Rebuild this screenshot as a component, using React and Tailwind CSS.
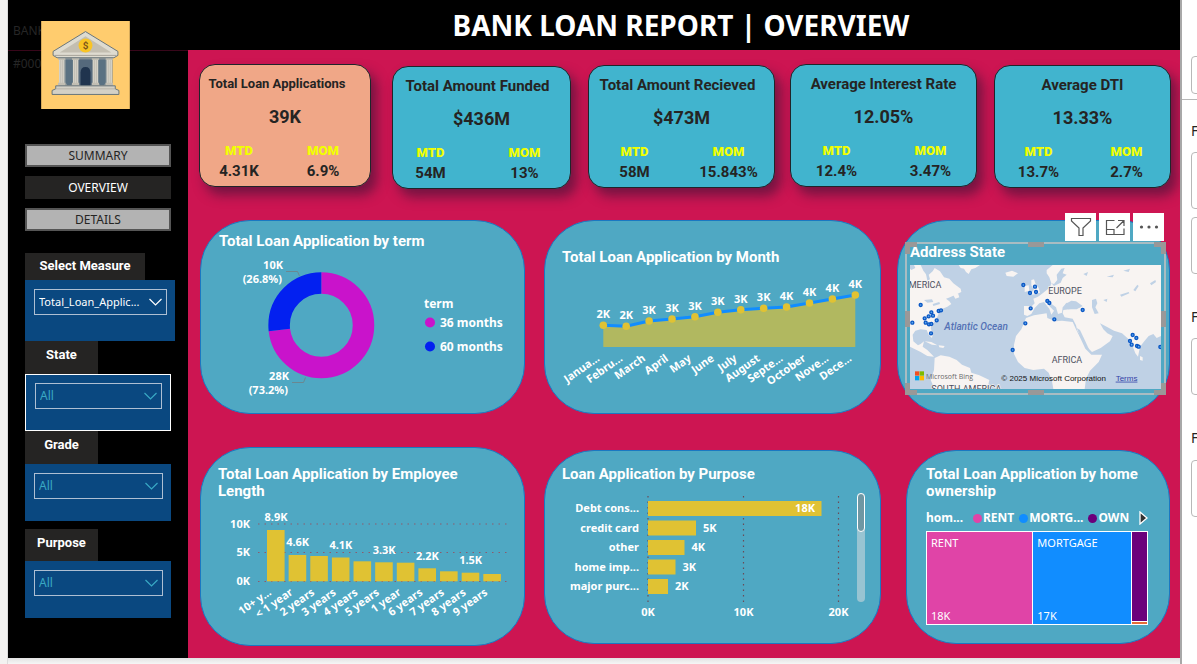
import React from "react";

const SEGOE = "font-['Noto_Sans','Open_Sans',sans-serif]";
const DIN = "font-['Roboto','Liberation_Sans',sans-serif]";

const kpis = [
  { title: "Total Loan Applications", value: "39K", mtd: "4.31K", mom: "6.9%", box: "bg-[#f0a787]", titleSize: "text-[13px] pr-4", cols: "grid-cols-[84px_84px] pr-2" },
  { title: "Total Amount Funded", value: "$436M", mtd: "54M", mom: "13%", box: "ml-[21px] mt-[2px] bg-[#41b4ce]", titleSize: "text-[15px] pr-2", cols: "grid-cols-[94px_94px] pr-2" },
  { title: "Total Amount Recieved", value: "$473M", mtd: "58M", mom: "15.843%", box: "ml-[17px] mt-[1px] bg-[#41b4ce]", titleSize: "text-[15px] pr-2", cols: "grid-cols-[94px_94px]" },
  { title: "Average Interest Rate", value: "12.05%", mtd: "12.4%", mom: "3.47%", box: "ml-[15px] bg-[#41b4ce]", titleSize: "text-[15px]", cols: "grid-cols-[94px_94px]" },
  { title: "Average DTI", value: "13.33%", mtd: "13.7%", mom: "2.7%", box: "ml-[17px] mt-[1px] bg-[#41b4ce]", titleSize: "text-[15px]", cols: "grid-cols-[88px_88px]" },
];

function Kpi({ k }) {
  return (
    <article className={`${DIN} h-[123px] min-w-0 rounded-2xl border border-[#20242a] pt-[9px] text-center font-bold text-[#252423] shadow-[6px_8px_12px_rgba(30,20,50,0.5)] ${k.box}`}>
      <h2 className={`leading-5 whitespace-nowrap ${k.titleSize}`}>{k.title}</h2>
      <p className="mt-[13px] text-lg leading-5">{k.value}</p>
      <dl className={`mt-[14px] grid justify-center ${k.cols}`}>
        <div>
          <dt className="text-[13px] leading-5 font-black text-[#f2ff00]">MTD</dt>
          <dd className="text-[15px] leading-5">{k.mtd}</dd>
        </div>
        <div>
          <dt className="text-[13px] leading-5 font-black text-[#f2ff00]">MOM</dt>
          <dd className="text-[15px] leading-5">{k.mom}</dd>
        </div>
      </dl>
    </article>
  );
}

function Panel({ className, children }) {
  return (
    <section className={`min-w-0 overflow-hidden rounded-[50px] border border-[#1a78c2] bg-[#4fa8c3] ${className}`}>
      {children}
    </section>
  );
}

function Heading({ className, children }) {
  return <h2 className={`${DIN} text-[15px] leading-[17px] font-bold text-white ${className}`}>{children}</h2>;
}

const chartText = `${SEGOE} fill-white text-[11px] font-bold`;
const legendText = `${SEGOE} fill-white text-[12px] font-bold`;

function TermChart() {
  return (
    <svg className="block" width="323" height="160" viewBox="201 251 323 160">
      <g fill="none" strokeWidth="21.5" transform="rotate(-90 321.3 325.3)">
        <circle cx="321.3" cy="325.3" r="42.2" pathLength="100" stroke="#c913cb" strokeDasharray="73.2 26.8" />
        <circle cx="321.3" cy="325.3" r="42.2" pathLength="100" stroke="#0320f0" strokeDasharray="26.8 73.2" strokeDashoffset="-73.2" />
      </g>
      <g fill="none" stroke="#6a8791" strokeWidth="1">
        <path d="M286 271.5h11.500l2 4.500" />
        <path d="M292 382.500h11.500l2-5" />
      </g>
      <g className={chartText} textAnchor="end">
        <text x="283" y="269">10K</text>
        <text x="282" y="283">(26.8%)</text>
        <text x="289" y="380">28K</text>
        <text x="288" y="394">(73.2%)</text>
      </g>
      <g className={legendText}>
        <text x="424" y="308">term</text>
        <text x="440" y="327">36 months</text>
        <text x="440" y="351">60 months</text>
      </g>
      <circle cx="430" cy="322.5" r="5" fill="#c913cb" />
      <circle cx="430" cy="346.500" r="5" fill="#0320f0" />
    </svg>
  );
}

const months = [
  ["Janua...", 325.3, "2K"], ["Febru...", 326.3, "2K"], ["March", 321, "3K"], ["April", 319, "3K"],
  ["May", 316.7, "3K"], ["June", 312.3, "3K"], ["July", 309.7, "3K"], ["August", 308.3, "3K"],
  ["Septe...", 307, "4K"], ["October", 303, "4K"], ["Nove...", 299, "4K"], ["Dece...", 295, "4K"],
].map(([name, y, label], i) => ({ name, y, label, x: 603.3 + i * 22.91 }));

function MonthChart() {
  const line = months.map((m) => `${m.x},${m.y}`).join(" ");
  return (
    <svg className="block" width="335" height="140" viewBox="545 270 335 140">
      <polygon points={`603.3,347 ${line} 855.3,347`} fill="#e0c030" fillOpacity="0.68" />
      <polyline points={line} fill="none" stroke="#118dff" strokeWidth="3" />
      {months.map((m) => (
        <g key={m.name}>
          <circle cx={m.x} cy={m.y} r="3.8" fill="#e0c233" />
          <text className={chartText} x={m.x} y={m.y - 7} textAnchor="middle">{m.label}</text>
          <text className={chartText} textAnchor="end" transform={`translate(${m.x - 3} 360) rotate(-35)`}>{m.name}</text>
        </g>
      ))}
    </svg>
  );
}

const lengths = [
  ["10+ y...", 530, "8.9K", 521], ["< 1 year", 555, "4.6K", 546], ["2 years", 556, "", 0], ["3 years", 557.5, "4.1K", 549],
  ["4 years", 561.3, "", 0], ["5 years", 562.3, "3.3K", 554], ["1 year", 562.7, "", 0], ["6 years", 568.3, "2.2K", 560],
  ["7 years", 571.3, "", 0], ["8 years", 572.7, "1.5K", 564], ["9 years", 574, "", 0],
];

function LengthChart() {
  return (
    <svg className="block" width="323" height="140" viewBox="201 500 323 140">
      <g stroke="#8d5a6c" strokeWidth="1.2" strokeDasharray="1.500 5">
        <path d="M258 524H507" />
        <path d="M258 552.5H507" />
        <path d="M258 581.5H507" />
      </g>
      <g className={chartText} textAnchor="end">
        <text x="250" y="528">10K</text>
        <text x="250" y="556">5K</text>
        <text x="250" y="585">0K</text>
      </g>
      {lengths.map(([name, top, label, y], i) => {
        const x = 267 + i * 21.63;
        return (
          <g key={name}>
            <rect x={x} y={top} width="17.600" height={581.3 - top} fill="#e0c233" />
            <text className={chartText} x={x + 9} y={y} textAnchor="middle">{label}</text>
            <text className={chartText} textAnchor="end" transform={`translate(${x + 5} 594) rotate(-35)`}>{name}</text>
          </g>
        );
      })}
    </svg>
  );
}

const purposes = [
  ["Debt cons...", 173.500, "18K"], ["credit card", 48, "5K"], ["other", 36.500, "4K"], ["home imp...", 27.500, "3K"], ["major purc...", 20, "2K"],
];

function PurposeChart() {
  return (
    <svg className="block" width="335" height="150" viewBox="545 486 335 150">
      <g stroke="#6b4a58" strokeWidth="1.2" strokeDasharray="1.500 4">
        <path d="M648 496V603" />
        <path d="M743.500 496V603" />
        <path d="M838.500 496V603" />
      </g>
      {purposes.map(([name, w, label], i) => {
        const y = 501 + i * 19.500;
        return (
          <g key={name} className={chartText}>
            <rect x="648" y={y} width={w} height="15" fill="#e0c233" />
            <text x="639" y={y + 11} textAnchor="end">{name}</text>
            <text x={i === 0 ? 815 : 655 + w} y={y + 11} textAnchor={i === 0 ? "end" : "start"}>{label}</text>
          </g>
        );
      })}
      <g className={chartText} textAnchor="middle">
        <text x="648" y="616">0K</text>
        <text x="743.500" y="616">10K</text>
        <text x="838.500" y="616">20K</text>
      </g>
      <rect x="857" y="493" width="8" height="109" rx="4" fill="#98c4d2" />
      <rect x="857.500" y="493.500" width="7" height="38" rx="3.500" fill="#6f97a3" stroke="#fff" />
    </svg>
  );
}

const pins = [
  [92, 315], [67, 368], [124, 337], [146, 333], [153, 331], [116, 349], [129, 347], [104, 355], [140, 361], [107, 368], [117, 373], [124, 372], [123, 400],
  [400, 255], [435, 260], [420, 279], [438, 276], [422, 325], [472, 303], [478, 309], [493, 358], [578, 330], [406, 370], [368, 450],
  [728, 405], [739, 414], [720, 423], [725, 434], [741, 438], [746, 440], [811, 441],
];

function WorldMap() {
  return (
    <svg className="block w-full" viewBox="60 195 753 372" role="img" aria-label="Map of loan applications by state">
      <rect x="60" y="195" width="753" height="372" fill="#bfd1e5" />
      <g fill="#f8f4f2">
        <path d="M60 195H92L100 212L112 228L128 214L134 204L150 214L162 232L178 236L190 250L212 266L214 276L196 284L180 292L168 296L178 304L184 312L172 320L158 326L150 334L144 346L138 360L128 372L122 384L128 402L126 414L116 404L110 390L92 388L76 392L68 404L70 424L84 436L92 432L102 424L98 440L112 450L124 462L132 470L112 468L92 456L60 440Z" />
        <path d="M104 424L124 426L142 436L126 434ZM146 436L164 438L160 444L148 442Z" />
        <path d="M134 474L152 466L178 470L200 480L216 494L240 504L244 518L268 526L298 540L292 567H134L122 540L132 510Z" />
        <path d="M206 195L270 195L256 204L244 208L236 222L228 216L222 206L212 204ZM346 218L366 212L384 220L370 230L350 228ZM188 282L204 280L208 292L196 296Z" />
        <path d="M424 240L432 238L436 250L446 264L450 278L428 284L422 280L432 270L424 256ZM404 258L416 256L418 272L404 276Z" />
        <path d="M402 318L426 318L434 310L430 296L444 290L458 280L470 270L480 262L484 250L478 232L470 220L470 210L488 195H813V408L800 414L790 402L776 408L764 422L750 440L744 470L736 460L724 428L712 414L696 400L672 392L650 380L630 370L640 388L652 400L668 408L660 424L632 444L606 456L586 436L574 410L562 392L558 376L548 356L524 352L518 340L520 330L548 326L572 322L560 308L544 312L530 308L518 322L516 338L504 342L498 322L480 308L468 302L480 320L492 332L484 344L478 326L462 306L448 310L434 324L424 342L412 348L402 344Z" />
        <path d="M408 354L432 346L470 340L472 354L496 364L516 362L548 366L558 388L572 416L586 446L604 464L636 464L626 486L600 512L588 536L584 567H490L486 544L476 518L462 506L430 510L404 504L384 486L372 462L372 434L378 408L394 388Z" />
        <path d="M750 468L758 472L758 482L750 480Z" />
      </g>
      <g fill="#bfd1e5">
        <path d="M60 195H72L76 204L64 210L60 206ZM98 195H112L120 206L104 212ZM138 195L172 195L190 206L176 218L152 210ZM108 222L116 224L120 238L112 242Z" />
        <path d="M484 250L492 258L512 248L518 234L530 224L518 220L524 204L514 206L500 224L502 240L492 252Z" />
        <path d="M526 312L544 302L558 304L578 318L560 328L534 328ZM606 300L618 296L622 310L616 322L626 340L614 342L606 322Z" />
        <path d="M560 384L570 390L586 424L598 450L590 446L572 412Z" />
        <path d="M640 300L652 296L650 306ZM690 284L716 276L718 280L694 290ZM730 270L742 254L746 258L736 274ZM780 250L796 240L798 246L784 256Z" />
        <path d="M102 300L126 298L130 306L112 308ZM128 312L148 306L150 312L130 318ZM580 222L594 216L590 228ZM650 230L672 224L668 232ZM700 212L720 206L716 216Z" />
      </g>
      <g className="font-['Roboto',sans-serif]" fill="#4e5160" stroke="#f8f4f2" strokeWidth="4" paintOrder="stroke">
        <text x="56" y="264" fontSize="27">MERICA</text>
        <text x="475" y="281" fontSize="27">EUROPE</text>
        <text x="485" y="490" fontSize="27">AFRICA</text>
        <text x="124" y="577" fontSize="27">SOUTH AMERICA</text>
      </g>
      <text className="font-['Roboto',sans-serif]" x="163" y="389" fontSize="30" fontStyle="italic" fontWeight="500" fill="#5471b5">Atlantic Ocean</text>
      <g fill="#5fa8ee" stroke="#0b57c4" strokeWidth="4">
        {pins.map(([x, y]) => <circle key={`${x}-${y}`} cx={x} cy={y} r="4.500" />)}
      </g>
      <path d="M75 514h13v13H75z" fill="#f25022" />
      <path d="M89 514h13v13H89z" fill="#7fba00" />
      <path d="M75 528h13v13H75z" fill="#00a4ef" />
      <path d="M89 528h13v13H89z" fill="#ffb900" />
      <text className="font-['Open_Sans',sans-serif]" x="108" y="536" fontSize="21" fill="#6b6b6b">Microsoft Bing</text>
      <text className="font-['Liberation_Sans',sans-serif]" x="334" y="542" fontSize="24" fill="#111">© 2025 Microsoft Corporation</text>
      <text className="font-['Liberation_Sans',sans-serif]" x="677" y="542" fontSize="24" fill="#3343a8" textDecoration="underline">Terms</text>
    </svg>
  );
}

function VisualButton({ label, children }) {
  return (
    <button type="button" aria-label={label} className="flex h-7 w-[31px] items-center justify-center bg-white">
      <svg width="22" height="22" viewBox="0 0 22 22" fill="none" stroke="#555" strokeWidth="1.2">{children}</svg>
    </button>
  );
}

const handles = [
  "-left-0.5 -top-0.5 h-3 w-3 border-l-[5px] border-t-[5px]",
  "-right-0.5 -top-0.5 h-3 w-3 border-r-[5px] border-t-[5px]",
  "-left-0.5 -bottom-0.5 h-3 w-3 border-l-[5px] border-b-[5px]",
  "-right-0.5 -bottom-0.5 h-3 w-3 border-r-[5px] border-b-[5px]",
  "left-1/2 -top-0.5 w-4 -translate-x-1/2 border-t-[5px]",
  "left-1/2 -bottom-0.5 w-4 -translate-x-1/2 border-b-[5px]",
  "-left-0.5 top-1/2 h-4 -translate-y-1/2 border-l-[5px]",
  "-right-0.5 top-1/2 h-4 -translate-y-1/2 border-r-[5px]",
];

function MapPanel() {
  return (
    <section className="ml-4 h-[194px] min-w-0 rounded-[50px] border border-[#1a78c2] bg-[#4fa8c3] pt-[21px] pr-[3px] pl-[7px]">
      <div className="relative border-2 border-[#a9bcc2] px-[3px] pb-1">
        <div className="absolute right-0 -top-[31px] flex gap-[3px]">
          <VisualButton label="Filters"><path d="M1.500 2.500h19v2.500l-7.500 7v7.500h-4V12L1.500 5z" /></VisualButton>
          <VisualButton label="Focus mode"><path d="M10.500 4.500H2.500v14h17.500v-6M2.500 13.500h7.500v5M14 4.500h6V10M20 4.500L12.500 12" /></VisualButton>
          <VisualButton label="More options"><g fill="#555" stroke="none"><circle cx="3.500" cy="11" r="1.600" /><circle cx="11" cy="11" r="1.600" /><circle cx="18.500" cy="11" r="1.600" /></g></VisualButton>
        </div>
        {handles.map((h) => <span key={h} className={`absolute border-[#9a9898] ${h}`} />)}
        <Heading className="pb-1">Address State</Heading>
        <WorldMap />
      </div>
    </section>
  );
}

function Legend({ dot, children }) {
  return (
    <li className="flex items-center gap-[1px]">
      <span className={`h-[9px] w-[9px] rounded-full ${dot}`} />
      {children}
    </li>
  );
}

function OwnershipChart() {
  return (
    <div className={`${SEGOE} mr-[21px] ml-[19px] text-[11px] text-white`}>
      <div className="mt-2 flex h-5 items-center justify-between text-xs font-bold whitespace-nowrap">
        <span>hom...</span>
        <ul className="flex gap-[5px]">
          <Legend dot="bg-[#e044a7]">RENT</Legend>
          <Legend dot="bg-[#118dff]">MORTG...</Legend>
          <Legend dot="bg-[#6b007b]">OWN</Legend>
        </ul>
        <button type="button" aria-label="Next legend items">
          <svg width="9" height="14" viewBox="0 0 9 14"><path d="M1 1v12l7-6z" fill="#333" stroke="#fff" strokeWidth="1.300" /></svg>
        </button>
      </div>
      <div className="mt-[3px] flex h-[94px] gap-px border border-white/70 bg-white text-[11px] leading-4">
        <div className="flex grow-[106] basis-0 flex-col justify-between bg-[#e044a7] px-1 pt-[3px]"><span>RENT</span><span>18K</span></div>
        <div className="flex grow-[98] basis-0 flex-col justify-between bg-[#118dff] px-1 pt-[3px]"><span>MORTGAGE</span><span>17K</span></div>
        <div className="flex grow-[16] basis-0 flex-col gap-px">
          <div className="grow bg-[#6b007b]" />
          <div className="h-[2px] bg-[#e66c37]" />
        </div>
      </div>
    </div>
  );
}

function BankLogo() {
  const columns = [178, 220, 280, 322];
  return (
    <svg className="relative ml-[33px] block" width="89" height="88" viewBox="124 62 268 266" role="img" aria-label="Bank">
      <rect x="124" y="62" width="268" height="266" fill="#ffcc6e" />
      <rect x="178" y="172" width="162" height="86" fill="#8d979a" />
      <path d="M198 178h22v70l-5 8h-12l-5-8zM297 178h22v70l-5 8h-12l-5-8z" fill="#5a7182" />
      <path d="M237 178h42v78h-42z" fill="#55697c" />
      <path d="M243 258v-40q0-17 15-17t15 17v40z" fill="#20344e" />
      {columns.map((x) => (
        <g key={x}>
          <rect x={x} y="178" width="16" height="78" fill="#d5d2c8" />
          <path d={`M${x + 5} 180v76M${x + 11} 180v76`} stroke="#b8b4aa" strokeWidth="2" />
          <path d={`M${x - 3} 173h22v6h-22zM${x - 3} 249h22v8h-22z`} fill="#c2beb3" />
        </g>
      ))}
      <path d="M258 94L160 154v12l12 7h172l12-7v-12z" fill="#dedbd0" stroke="#68757b" strokeWidth="3" strokeLinejoin="round" />
      <path d="M258 108L180 157h156z" fill="#c3beb1" />
      <path d="M164 166h188" stroke="#a6a398" strokeWidth="3" />
      <path d="M168 258h180v9l11 5v12H157v-12l11-5z" fill="#d3d0c6" stroke="#68757b" strokeWidth="3" strokeLinejoin="round" />
      <path d="M168 267h180" stroke="#aaa79d" strokeWidth="2" />
      <circle cx="258" cy="136" r="21" fill="#f9c425" />
      <text x="258" y="146" textAnchor="middle" className="font-['Roboto',sans-serif]" fontSize="30" fontWeight="700" fill="#7c551b">$</text>
    </svg>
  );
}

function NavButton({ active, children }) {
  return (
    <button
      type="button"
      className={`block h-[23px] w-full text-xs ${active ? "bg-[#252423] text-white" : "border-2 border-[#555] bg-[#b3b3b3] text-[#252423]"}`}
    >
      {children}
    </button>
  );
}

function Slicer({ id, label, tab, box, field, value }) {
  return (
    <div>
      <label htmlFor={id} className={`${DIN} block bg-[#252423] text-center text-[13px] font-bold text-white ${tab}`}>{label}</label>
      <div className={`bg-[#0a4880] pr-2 pl-[9px] ${box}`}>
        <div className="relative">
          <select id={id} className={`block h-[26px] w-full appearance-none border border-[#aebfd3] bg-transparent pl-1 ${field}`}>
            <option>{value}</option>
          </select>
          <svg className={`pointer-events-none absolute top-[9px] right-[5px] ${field}`} width="13" height="8" viewBox="0 0 13 8" fill="none" stroke="currentColor" strokeWidth="1.200">
            <path d="M.5 1l6 6 6-6" />
          </svg>
        </div>
      </div>
    </div>
  );
}

function Sidebar() {
  return (
    <aside className="relative w-[180px] shrink-0 bg-black pt-[21px] pb-10">
      <div className="absolute inset-x-0 top-[50px] border-t border-[#38061a]" />
      <div className="absolute top-[23px] left-[5px] text-xs text-[#262626]">BANK</div>
      <div className="absolute top-[56px] left-[5px] text-xs text-[#262626]">#000</div>
      <BankLogo />
      <nav className="mt-[35px] ml-[17px] flex w-[146px] flex-col gap-[9px]">
        <NavButton>SUMMARY</NavButton>
        <NavButton active>OVERVIEW</NavButton>
        <NavButton>DETAILS</NavButton>
      </nav>
      <form className="mt-[22px] ml-[17px]">
        <Slicer id="measure" label="Select Measure" tab="w-[120px] h-[27px] leading-[26px]" box="w-[150px] h-[61px] pt-[9px]" field="text-[11px] text-white" value="Total_Loan_Applic..." />
        <Slicer id="state" label="State" tab="w-[73px] h-[33px] leading-[28px]" box="w-[146px] h-[57px] border border-white pt-2" field="text-xs text-[#39a9c4]" value="All" />
        <Slicer id="grade" label="Grade" tab="w-[73px] h-[33px] leading-[28px]" box="w-[146px] h-[57px] pt-[9px]" field="text-xs text-[#39a9c4]" value="All" />
        <div className="pt-2">
          <Slicer id="purpose" label="Purpose" tab="w-[73px] h-8 leading-[28px]" box="w-[146px] h-[57px] pt-[9px]" field="text-xs text-[#39a9c4]" value="All" />
        </div>
      </form>
    </aside>
  );
}

function FilterPane() {
  const card = "w-10 rounded-sm border border-[#b8b8b8]";
  return (
    <aside className="w-[17px] shrink-0 overflow-hidden border-l-2 border-[#a8a8a8] bg-white text-sm leading-4 text-[#252423]">
      <div className="h-[100px] border-b border-[#b8b8b8] pt-[56px] pl-[9px]">
        <div className={`h-[38px] ${card}`} />
      </div>
      <div className="pt-[23px] pl-[9px]">
        <div>F</div>
        <div className={`mt-[13px] h-[57px] ${card}`} />
        <div className={`mt-2 h-[57px] ${card}`} />
        <div className="mt-[35px]">F</div>
        <div className={`mt-[13px] h-[57px] ${card}`} />
        <div className="mt-[35px]">F</div>
        <div className={`mt-[14px] h-[57px] ${card}`} />
      </div>
    </aside>
  );
}

export default function App() {
  return (
    <div className={`${SEGOE} flex min-h-screen bg-[#f3f2f1]`}>
      <div className="w-2 shrink-0 border-r border-[#dcdcdc] bg-[#f3f2f1]" />
      <div className="flex min-w-0 grow flex-col">
        <div className="flex">
          <Sidebar />
          <main className="flex min-w-0 grow flex-col bg-[#cd1552]">
            <header className="flex h-[50px] items-center justify-center bg-black pr-1.5">
              <h1 className="text-[28px] leading-[48px] font-bold text-white">BANK LOAN REPORT | OVERVIEW</h1>
            </header>
            <div className="grid grid-cols-[172fr_200fr_204fr_202fr_194fr] items-start pt-[14px] pr-[9px] pl-[11px]">
              {kpis.map((k) => <Kpi key={k.title} k={k} />)}
            </div>
            <div className="mt-[31px] grid grid-cols-[325fr_356fr_289fr] items-start pr-[10px] pl-3">
              <Panel className="h-[194px]">
                <Heading className="pt-[12px] pb-[1px] pl-[18px]">Total Loan Application by term</Heading>
                <TermChart />
              </Panel>
              <Panel className="ml-[19px] h-[194px]">
                <Heading className="pt-[28px] pb-1 pl-[17px]">Total Loan Application by Month</Heading>
                <MonthChart />
              </Panel>
              <MapPanel />
            </div>
            <div className="mt-[33px] grid grid-cols-[325fr_356fr_289fr] items-start pr-[10px] pb-3 pl-3">
              <Panel className="h-[199px]">
                <Heading className="pt-[18px] pr-10 pl-[17px]">Total Loan Application by Employee Length</Heading>
                <LengthChart />
              </Panel>
              <Panel className="mt-[3px] ml-[19px] h-[194px]">
                <Heading className="pt-[15px] pb-[3px] pl-[17px]">Loan Application by Purpose</Heading>
                <PurposeChart />
              </Panel>
              <Panel className="mt-[3px] ml-[25px] h-[194px]">
                <Heading className="pt-[15px] pr-5 pl-[19px]">Total Loan Application by home ownership</Heading>
                <OwnershipChart />
              </Panel>
            </div>
          </main>
        </div>
        <div className="grow bg-linear-to-b from-[#e2e2e2] to-[#f6f6f6]" />
      </div>
      <FilterPane />
    </div>
  );
}
